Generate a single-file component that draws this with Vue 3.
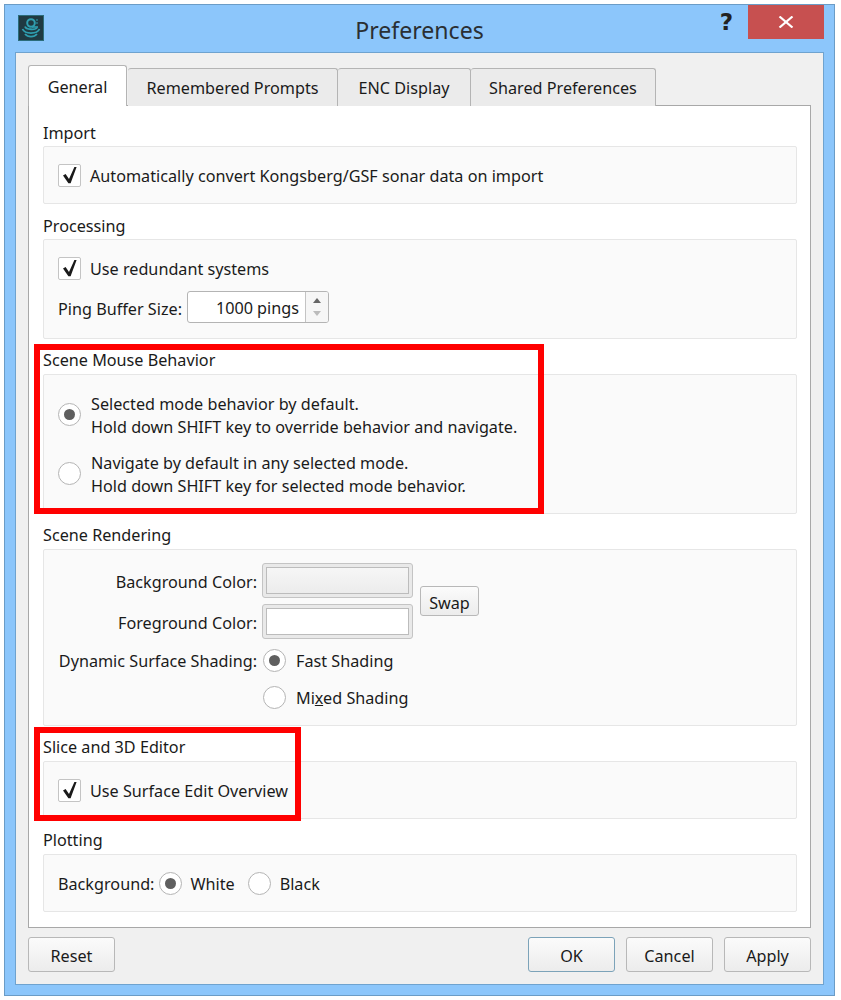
<script setup>
const tabs = ['Remembered Prompts', 'ENC Display', 'Shared Preferences']
const tick = 'M4 10.5 L6.6 9 L10 14 L15.4 2 L17.6 2 L11.6 18.2 L9.4 18.2 Z'
</script>

<template>
  <div class="window">
    <header class="titlebar">
      <div class="title-left">
        <svg class="app-icon" viewBox="0 0 26 26" width="26" height="26">
          <rect width="26" height="26" fill="#1f3a42" />
          <rect x="0.5" y="0.5" width="25" height="25" fill="none" stroke="#2b6c7a" />
          <circle cx="13" cy="8" r="3.8" fill="none" stroke="#2f9fb0" stroke-width="2" />
          <path d="M14 12 L20 12" stroke="#2f9fb0" stroke-width="1.6" />
          <path d="M18 5 L20 5 M18 8 L20 8" stroke="#2f9fb0" stroke-width="1.2" />
          <path d="M7 11.5 C8 15 18 15 19 12.5" fill="none" stroke="#2f9fb0" stroke-width="1.8" />
          <path d="M4.5 14 C7 19.5 19 19.5 21.5 14" fill="none" stroke="#2f9fb0" stroke-width="1.8" />
          <path d="M7 19 C10 22.5 16 22.5 19 19" fill="none" stroke="#2f9fb0" stroke-width="1.8" />
        </svg>
      </div>
      <div class="title">Preferences</div>
      <div class="title-right">
        <span class="help">?</span>
        <div class="close">
          <svg viewBox="0 0 16 12" width="16" height="12"><path d="M1.5 0.5 L14.5 11.5 M14.5 0.5 L1.5 11.5" stroke="#fff" stroke-width="2.2" /></svg>
        </div>
      </div>
    </header>

    <main class="client">
      <nav class="tabs">
        <div class="tab active">General</div>
        <div v-for="t in tabs" :key="t" class="tab" :class="'tab-' + t.split(' ')[0]">{{ t }}</div>
      </nav>

      <div class="pane">
        <section>
          <h3>Import</h3>
          <div class="box box-import">
            <label class="row"><span class="check"><svg viewBox="0 0 21 21"><path :d="tick" fill="#1a1a1a" /></svg></span>Automatically convert Kongsberg/GSF sonar data on import</label>
          </div>
        </section>

        <section>
          <h3>Processing</h3>
          <div class="box box-processing">
            <label class="row"><span class="check"><svg viewBox="0 0 21 21"><path :d="tick" fill="#1a1a1a" /></svg></span>Use redundant systems</label>
            <div class="row ping">
              <span class="ping-label">Ping Buffer Size:</span>
              <div class="spin">
                <span class="spin-value">1000 pings</span>
                <span class="spin-btns"><i class="up"></i><i class="down"></i></span>
              </div>
            </div>
          </div>
        </section>

        <section>
          <h3>Scene Mouse Behavior</h3>
          <div class="box box-mouse">
            <label class="row"><span class="radio on"></span><span class="two">Selected mode behavior by default.<br />Hold down SHIFT key to override behavior and navigate.</span></label>
            <label class="row"><span class="radio"></span><span class="two">Navigate by default in any selected mode.<br />Hold down SHIFT key for selected mode behavior.</span></label>
          </div>
        </section>

        <section>
          <h3>Scene Rendering</h3>
          <div class="box box-render">
            <div class="colors">
              <div class="color-grid">
                <span class="lab">Background Color:</span>
                <div class="well"><div class="well-in grey"></div></div>
                <span class="lab">Foreground Color:</span>
                <div class="well"><div class="well-in"></div></div>
              </div>
              <button class="btn swap">Swap</button>
            </div>
            <div class="shade-grid">
              <span class="lab">Dynamic Surface Shading:</span>
              <label class="row"><span class="radio on"></span>Fast Shading</label>
              <span></span>
              <label class="row"><span class="radio"></span><span>Mi<u>x</u>ed Shading</span></label>
            </div>
          </div>
        </section>

        <section>
          <h3>Slice and 3D Editor</h3>
          <div class="box box-slice">
            <label class="row"><span class="check"><svg viewBox="0 0 21 21"><path :d="tick" fill="#1a1a1a" /></svg></span>Use Surface Edit Overview</label>
          </div>
        </section>

        <section>
          <h3>Plotting</h3>
          <div class="box box-plot">
            <div class="row plot">
              <span>Background:</span>
              <label class="row"><span class="radio on"></span>White</label>
              <label class="row"><span class="radio"></span>Black</label>
            </div>
          </div>
        </section>
      </div>

      <footer class="actions">
        <button class="btn">Reset</button>
        <div class="spacer"></div>
        <button class="btn ok">OK</button>
        <button class="btn">Cancel</button>
        <button class="btn">Apply</button>
      </footer>
    </main>

    <div class="mark mark-a"></div>
    <div class="mark mark-b"></div>
  </div>
</template>

<style>
html, body { margin: 0; background: #fff; }
</style>

<style scoped>
* { box-sizing: border-box; }
.window {
  position: relative;
  width: 831px;
  height: 992px;
  margin: 4px 0 0 4px;
  background: #8cc6fb;
  border: 1px solid #6b9cc6;
  padding: 0 10px 10px;
  display: flex;
  flex-direction: column;
  font-family: "Noto Sans", "Open Sans", sans-serif;
  font-size: 16.2px;
  color: #1a1a1a;
  white-space: nowrap;
}
.titlebar {
  height: 47px;
  display: grid;
  grid-template-columns: 1fr auto 1fr;
  align-items: start;
  flex: none;
}
.title-left { padding: 10px 0 0 3px; }
.app-icon { display: block; }
.title {
  font-size: 23.1px;
  line-height: 32px;
  padding-top: 9px;
  color: #2a2f33;
}
.title-right { display: flex; justify-content: flex-end; }
.help {
  font-family: "DejaVu Sans", sans-serif;
  font-weight: 700;
  font-size: 23px;
  line-height: 24px;
  margin: 5px 15px 0 0;
  color: #222;
}
.close {
  width: 76px;
  height: 34px;
  background: #c75050;
  display: flex;
  align-items: center;
  justify-content: center;
}
.client {
  flex: 1;
  background: #f0f0f0;
  border: 1px solid #6fa3cf;
  padding: 12px 12px 0 12px;
  display: flex;
  flex-direction: column;
}
.tabs {
  display: flex;
  align-items: flex-end;
  height: 41px;
  flex: none;
  position: relative;
  z-index: 1;
  margin-bottom: -1px;
}
.tab {
  height: 38px;
  padding-top: 1px;
  border: 1px solid #b4b4b4;
  border-left: 0;
  border-bottom: 0;
  border-radius: 3px 3px 0 0;
  background: #ebebeb;
  display: flex;
  align-items: center;
  justify-content: center;
  line-height: 1;
}
.tab.active {
  height: 41px;
  width: 99px;
  padding-top: 3px;
  background: #fff;
  border-left: 1px solid #b4b4b4;
  margin-right: 1px;
}
.tab-Remembered { width: 210px; }
.tab-ENC { width: 133px; }
.tab-Shared { width: 185px; }
.pane {
  height: 823px;
  flex: none;
  background: #fff;
  border: 1px solid #a8a8a8;
  padding: 5px 13px 0 14px;
}
h3 {
  margin: 0;
  font-weight: 400;
  font-size: inherit;
  height: 35px;
  padding-top: 9px;
  line-height: 26px;
}
section:nth-child(n+3) h3 { padding-top: 8px; }
.box {
  background: #fafafa;
  border: 1px solid #e6e6e6;
  border-radius: 2px;
  padding: 0 14px;
}
.box-import { height: 58px; padding-top: 1px; display: flex; align-items: center; }
.box-processing { height: 100px; padding-top: 17px; display: flex; flex-direction: column; gap: 11px; }
.box-mouse { height: 140px; padding-top: 18px; display: flex; flex-direction: column; gap: 13px; }
.box-mouse .radio { margin-top: -3px; }
.box-render { height: 177px; padding-top: 13px; }
.box-slice { height: 58px; padding-top: 1px; display: flex; align-items: center; }
.box-plot { height: 58px; padding-top: 1px; display: flex; align-items: center; }
.row { display: flex; align-items: center; }
.check {
  width: 23px;
  height: 23px;
  border: 1px solid #c4c4c4;
  border-radius: 2px;
  background: #fff;
  margin-right: 9px;
  flex: none;
}
.check svg { display: block; width: 21px; height: 21px; }
.radio {
  width: 23px;
  height: 23px;
  border: 1px solid #b4b4b4;
  border-radius: 50%;
  background: #fff;
  margin-right: 10px;
  flex: none;
  display: flex;
  align-items: center;
  justify-content: center;
}
.radio.on::after {
  content: "";
  width: 11px;
  height: 11px;
  border-radius: 50%;
  background: #5f5f5f;
}
.two { line-height: 23px; }
.ping { gap: 5px; }
.ping-label { padding-top: 3px; }
.spin {
  width: 142px;
  height: 32px;
  border: 1px solid #b4b4b4;
  border-radius: 3px;
  background: #fff;
  display: flex;
}
.spin-value { flex: 1; text-align: right; padding-right: 6px; line-height: 33px; }
.spin-btns {
  width: 23px;
  border-left: 1px solid #c4c4c4;
  background: #f6f6f6;
  border-radius: 0 2px 2px 0;
  display: flex;
  flex-direction: column;
  align-items: center;
  justify-content: center;
  gap: 8px;
}
.up, .down { width: 0; height: 0; border-left: 4.5px solid transparent; border-right: 4.5px solid transparent; }
.up { border-bottom: 5px solid #666; }
.down { border-top: 5px solid #bbb; }
.colors { display: flex; align-items: center; }
.color-grid {
  display: grid;
  grid-template-columns: 199px 151px;
  column-gap: 5px;
  row-gap: 6px;
  align-items: center;
}
.color-grid .lab { padding-top: 2px; }
.lab { text-align: right; }
.well {
  height: 35px;
  border: 1px solid #c4c4c4;
  border-radius: 3px;
  background: #e9e9e9;
  padding: 3px 3px;
}
.well-in { height: 100%; border: 1px solid #bcbcbc; background: #fff; }
.well-in.grey { background: linear-gradient(#f6f6f6, #ececec); }
.btn {
  font: inherit;
  color: inherit;
  border: 1px solid #b8b8b8;
  border-radius: 3px;
  background: linear-gradient(#fbfbfb, #ececec);
  width: 87px;
  height: 35px;
  padding: 2px 0 0;
}
.swap { width: 59px; height: 30px; margin-left: 7px; padding-top: 3px; }
.shade-grid {
  display: grid;
  grid-template-columns: 199px auto;
  column-gap: 6px;
  row-gap: 14px;
  align-items: center;
  margin-top: 10px;
}
.plot { gap: 5px; }
.plot label .radio { margin-right: 8px; }
.plot label + label { margin-left: 8px; }
.plot label + label .radio { margin-right: 9px; }
.actions {
  display: flex;
  gap: 11px;
  margin-top: 9px;
}
.spacer { flex: 1; }
.ok { border-color: #7ca3b9; }
.mark { position: absolute; border: 6px solid #f00; pointer-events: none; }
.mark-a { left: 29px; top: 339px; width: 510px; height: 170px; }
.mark-b { left: 29px; top: 722px; width: 267px; height: 94px; }
</style>
